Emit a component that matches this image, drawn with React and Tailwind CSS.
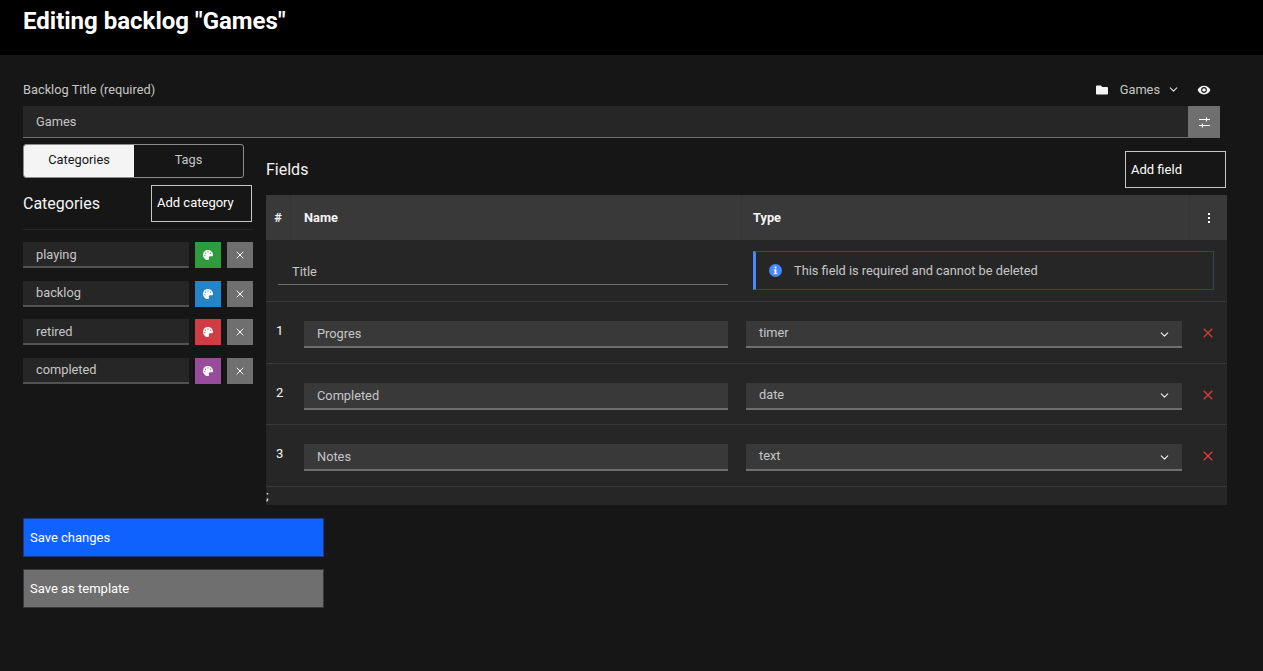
import { ChevronDown, X } from "lucide-react";
import { FaFolder, FaPalette } from "react-icons/fa";
import { MdVisibility } from "react-icons/md";

const categories = [
  { name: "playing", color: "bg-[#2f9a3e]" },
  { name: "backlog", color: "bg-[#2484c6]" },
  { name: "retired", color: "bg-[#cf3c43]" },
  { name: "completed", color: "bg-[#974d9b]" },
];

const fields = [
  { n: 1, name: "Progres", type: "timer" },
  { n: 2, name: "Completed", type: "date" },
  { n: 3, name: "Notes", type: "text" },
];

function SlidersIcon() {
  return (
    <svg width="13" height="13" viewBox="0 0 13 13" fill="none" stroke="currentColor" strokeWidth="1.2">
      <path d="M1 3.5h11M1 9.5h11" />
      <path d="M8.5 1.5v4M4.5 7.5v4" />
    </svg>
  );
}

function InfoIcon() {
  return (
    <svg width="13" height="13" viewBox="0 0 16 16">
      <circle cx="8" cy="8" r="8" fill="#4589ff" />
      <rect x="6.9" y="6.8" width="2.2" height="5.4" fill="#fff" />
      <rect x="5.8" y="6.8" width="3" height="1.2" fill="#fff" />
      <rect x="5.8" y="11.2" width="4.4" height="1.2" fill="#fff" />
      <circle cx="8" cy="4.4" r="1.2" fill="#fff" />
    </svg>
  );
}

function CategoryRow({ name, color }) {
  return (
    <div className="flex h-[26px]">
      <div className="flex w-[166px] items-center border-b-2 border-[#525252] bg-[#262626] pl-[13px] text-[12.8px] text-[#c6c6c6]">
        {name}
      </div>
      <button className={`ml-[6px] flex w-[26px] items-center justify-center text-white ${color}`}>
        <FaPalette size={10} />
      </button>
      <button className="ml-[6px] flex w-[26px] items-center justify-center bg-[#6f6f6f] text-white">
        <X size={12} />
      </button>
    </div>
  );
}

function FieldRow({ n, name, type }) {
  return (
    <div className="grid h-[61.6px] grid-cols-[38px_442px_448px_27px] border-b border-[#393939]">
      <div className="pl-[10px] pt-[20px] text-[13px] leading-[18px] text-[#f4f4f4]">{n}</div>
      <div className="pt-[19px]">
        <div className="flex h-[27px] w-[424px] items-center border-b-2 border-[#6f6f6f] bg-[#393939] pl-[13px] text-[12.8px] text-[#c6c6c6]">
          {name}
        </div>
      </div>
      <div className="pt-[19px]">
        <div className="flex h-[27px] w-[436px] items-center justify-between border-b-2 border-[#6f6f6f] bg-[#393939] pl-[13px] pr-[11px] text-[12.8px] text-[#c6c6c6]">
          <span className="mb-[2px]">{type}</span>
          <ChevronDown size={13} strokeWidth={2} className="mt-px text-[#f4f4f4]" />
        </div>
      </div>
      <div className="flex items-start justify-center pt-[23px] text-[#da3c3c]">
        <X size={16} strokeWidth={1.75} />
      </div>
    </div>
  );
}

export default function App() {
  return (
    <div className="min-h-[671px] bg-[#161616] font-['Roboto',sans-serif]">
      <header className="h-[55px] bg-black pl-[23px] pt-[5px]">
        <h1 className="text-[24px] font-bold leading-[32px] text-white">Editing backlog "Games"</h1>
      </header>

      <main className="pl-[23px] pr-[36px]">
        <div className="flex h-[51px] items-start justify-between pr-[16px] pt-[26px]">
          <span className="text-[12.8px] leading-[17px] text-[#c6c6c6]">Backlog Title (required)</span>
          <div className="flex items-center text-[#c6c6c6]">
            <FaFolder size={12} className="text-[#f4f4f4]" />
            <span className="ml-[12px] text-[12.8px] leading-[17px]">Games</span>
            <ChevronDown size={13} strokeWidth={2} className="ml-[7px] text-[#e0e0e0]" />
            <MdVisibility size={14} className="ml-[17px] text-[#f4f4f4]" />
          </div>
        </div>

        <div className="flex h-[32px] w-[1197px]">
          <div className="flex flex-1 items-center border-b border-[#6f6f6f] bg-[#262626] pl-[13px] text-[12.8px] text-[#c6c6c6]">
            Games
          </div>
          <button className="flex w-[32px] items-center justify-center bg-[#6f6f6f] text-white">
            <SlidersIcon />
          </button>
        </div>

        <div className="flex">
          <aside className="w-[230px]">
            <div className="mt-[6px] flex h-[34px] w-[221px] overflow-hidden rounded-[3px] border border-[#8d8d8d] text-[12.8px]">
              <div className="flex w-[110px] items-center justify-center bg-[#f4f4f4] pb-[2px] text-[#161616]">Categories</div>
              <div className="flex flex-1 items-center justify-center pb-[2px] text-[#c6c6c6]">Tags</div>
            </div>
            <div className="mt-[7px] flex h-[37px] items-center justify-between">
              <h2 className="text-[16px] text-[#f4f4f4]">Categories</h2>
              <button className="mr-px flex h-[37px] w-[101px] items-center border border-[#c6c6c6] pb-px pl-[5px] text-[13px] text-white">
                Add category
              </button>
            </div>
            <div className="mt-[7px] border-t border-[#262626]" />
            <div className="mt-[12.4px] flex flex-col gap-[12.4px]">
              {categories.map((c) => (
                <CategoryRow key={c.name} {...c} />
              ))}
            </div>
          </aside>

          <section className="ml-[13px] w-[961px]">
            <div className="flex h-[57px] items-start justify-between pt-[13px]">
              <h2 className="mt-[9px] text-[16px] leading-[20px] text-[#f4f4f4]">Fields</h2>
              <button className="mr-px flex h-[37px] w-[101px] items-center border border-[#c6c6c6] pl-[5px] text-[13px] text-white">
                Add field
              </button>
            </div>

            <div className="bg-[#262626]">
              <div className="grid h-[45px] grid-cols-[25px_450px_448px_38px] items-center bg-[#393939] text-[12.8px] font-bold text-[#f4f4f4]">
                <div className="flex h-full items-center justify-center border-r border-[#353535]">#</div>
                <div className="pl-[13px]">Name</div>
                <div className="flex h-full items-center border-l border-[#353535] pl-[11px]">Type</div>
                <div className="flex h-full flex-col items-center justify-center gap-[2px] border-l border-[#353535]">
                  <span className="h-[2px] w-[2px] bg-white" />
                  <span className="h-[2px] w-[2px] bg-white" />
                  <span className="h-[2px] w-[2px] bg-white" />
                </div>
              </div>

              <div className="grid h-[62px] grid-cols-[487px_461px] border-b border-[#393939]">
                <div className="pl-[12px] pt-[20px]">
                  <div className="flex h-[25px] w-[450px] items-center border-b border-[#6f6f6f] pl-[14px] text-[12.8px] text-[#c6c6c6]">
                    Title
                  </div>
                </div>
                <div className="pt-[11px]">
                  <div className="flex h-[39px] w-[461px] items-center border border-l-[3px] border-[#2e4473] border-l-[#4589ff] pl-[13px] text-[12.8px] text-[#c6c6c6]">
                    <InfoIcon />
                    <span className="ml-[12px]">This field is required and cannot be deleted</span>
                  </div>
                </div>
              </div>

              {fields.map((f) => (
                <FieldRow key={f.n} {...f} />
              ))}

              <div className="h-[18.6px] text-[13px] leading-[18px] text-white">;</div>
            </div>
          </section>
        </div>

        <button className="mt-[12.6px] flex h-[39px] w-[301px] items-center border border-[#1d3a80] bg-[#0f62fe] pl-[6px] text-[13px] text-white">
          Save changes
        </button>
        <button className="mt-[12px] flex h-[39px] w-[301px] items-center border border-[#393939] bg-[#6f6f6f] pl-[6px] text-[13px] text-white">
          Save as template
        </button>
      </main>
    </div>
  );
}
